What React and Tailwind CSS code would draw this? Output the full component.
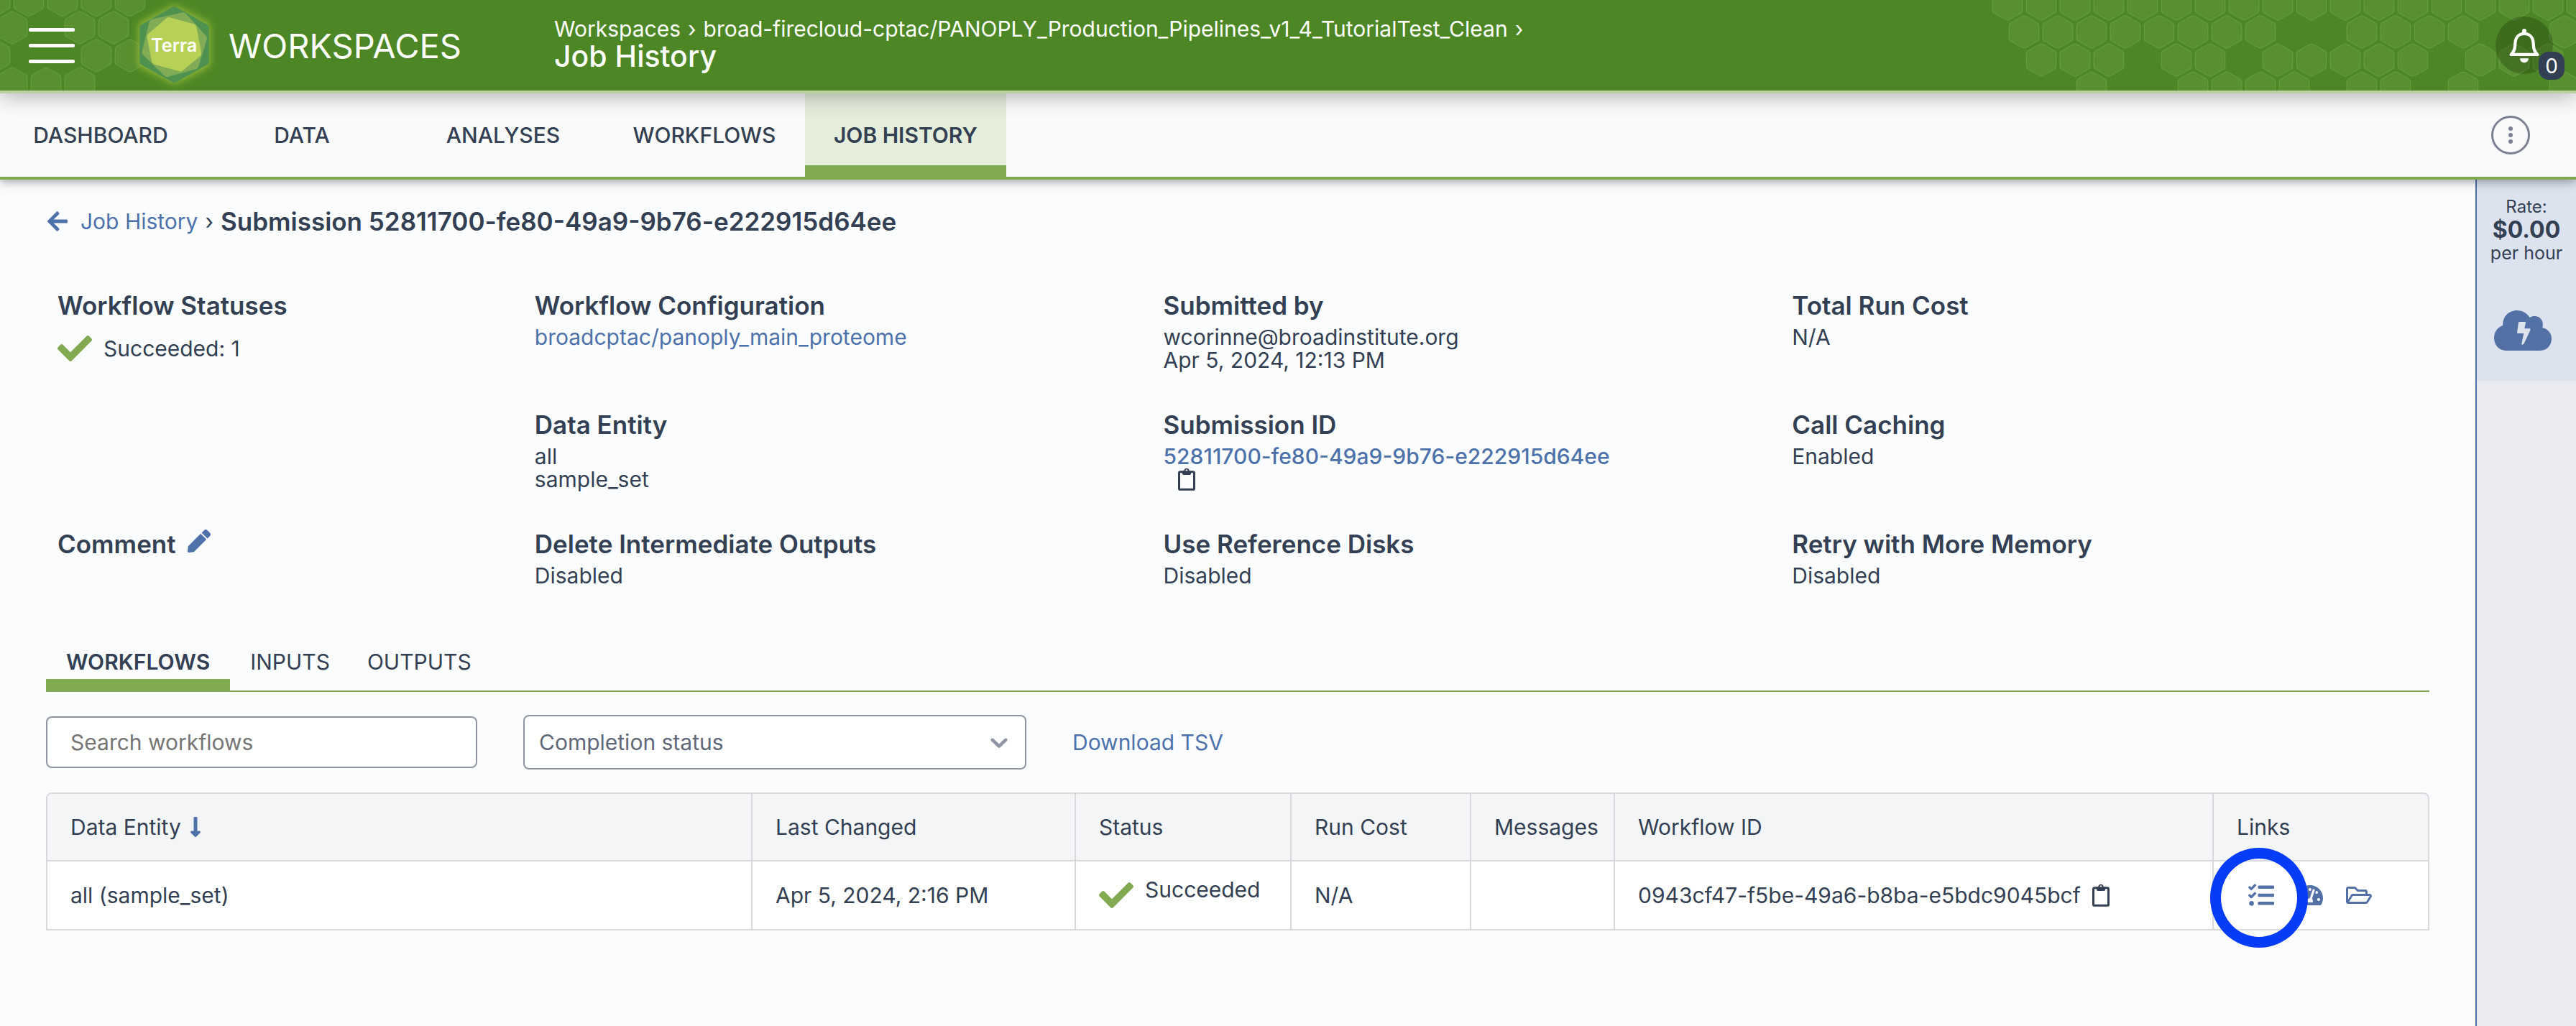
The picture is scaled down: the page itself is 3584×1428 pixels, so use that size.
import {
  FaArrowLeft,
  FaCheck,
  FaLongArrowAltDown,
  FaPen,
  FaRegFolderOpen,
  FaTachometerAlt,
  FaTasks,
} from "react-icons/fa";

const HEX =
  "M-3 -21.5 Q0 -23.2 3 -21.5 L18 -13 Q20.7 -11.5 20.7 -8.5 L20.7 8.5 Q20.7 11.5 18 13 L3 21.5 Q0 23.2 -3 21.5 L-18 13 Q-20.7 11.5 -20.7 8.5 L-20.7 -8.5 Q-20.7 -11.5 -18 -13 Z";

const RIGHT_ROWS = [
  { x: 33, y: 5.5, cells: [0, 1, 2, 3, 4, 5, 6, 7, 8, 9, 10, 11, 12, 13, 14, 15, 16, 17] },
  { x: 56, y: 44.5, cells: [0, 1, 2, 3, 4, 5, 6, 7, 10, 11, 12, 13, 16] },
  { x: 33, y: 83.5, cells: [1, 2, 3, 5, 6, 8, 9, 10, 11, 12, 14, 15, 16] },
  { x: 56, y: 122.5, cells: [2, 5, 6, 7, 8, 10, 11, 13, 16] },
];

const LEFT_ROWS = [
  { x: -7, y: 0, cells: [0, 1, 2, 3, 4] },
  { x: 17, y: 38.5, cells: [0, 2, 3] },
  { x: -7, y: 77.5, cells: [0, 3, 4] },
  { x: 17, y: 116.5, cells: [0, 1, 2] },
];

function HexField({ rows, width, className }) {
  return (
    <svg aria-hidden="true" width={width} height="126" viewBox={`0 0 ${width} 126`} className={className}>
      {rows.map((row) =>
        row.cells.map((c) => (
          <path
            key={`${row.y}-${c}`}
            d={HEX}
            transform={`translate(${row.x + c * 47} ${row.y})`}
            fill="#588f2f"
            stroke="#639a3f"
            strokeWidth="1.4"
          />
        ))
      )}
    </svg>
  );
}

function TerraLogo() {
  return (
    <svg
      role="img"
      aria-label="Terra"
      viewBox="552 0 350 378"
      className="h-[126px] w-[117px] overflow-visible"
    >
      <defs>
        <filter id="glow" x="-30%" y="-30%" width="160%" height="160%">
          <feGaussianBlur stdDeviation="16" />
        </filter>
      </defs>
      <path d="M727 22L875 100V275L727 350L580 275V100Z" fill="#a5c840" filter="url(#glow)" opacity="0.85" />
      <g strokeLinejoin="round" strokeWidth="32">
        <path d="M727 43L856 117V257L727 329L598 257V117Z" fill="#4f9250" stroke="#4f9250" />
        <path d="M764 68L847 160L813 273L697 305L608 218L638 96Z" fill="#82ab56" stroke="#82ab56" />
        <path d="M705 88L804 116L824 223L752 282L649 254L629 153Z" fill="#b6d156" stroke="#b6d156" />
      </g>
      <text x="726" y="216" textAnchor="middle" fontSize="76" fontWeight="600" fill="#fff">
        Terra
      </text>
    </svg>
  );
}

function Bell() {
  return (
    <svg aria-hidden="true" viewBox="1280 112 128 148" className="h-[49px] w-[42px]">
      <path
        d="M1288 224C1299 213 1305 200 1305 182C1305 152 1320 135 1344 135C1368 135 1383 152 1383 182C1383 200 1389 213 1400 224Z"
        fill="none"
        stroke="#fff"
        strokeWidth="13"
        strokeLinejoin="round"
      />
      <path d="M1344 123V132" stroke="#fff" strokeWidth="18" strokeLinecap="round" />
      <path d="M1326 240H1362C1362 252 1354 258 1344 258C1334 258 1326 252 1326 240Z" fill="#fff" />
    </svg>
  );
}

function Clipboard() {
  return (
    <svg aria-hidden="true" viewBox="96 207 72 96" className="h-8 w-6">
      <rect x="100.5" y="224.500" width="63" height="73.500" rx="5" fill="none" stroke="#333f52" strokeWidth="9" />
      <path
        fillRule="evenodd"
        fill="#333f52"
        d="M114 220H121A11 11 0 0 1 143 220H150V232Q150 237 145 237H119Q114 237 114 232ZM132 214A4.500 4.500 0 1 0 132 223A4.500 4.500 0 1 0 132 214Z"
      />
    </svg>
  );
}

function CloudBolt() {
  return (
    <svg aria-hidden="true" viewBox="0 0 240 168" className="h-14 w-20">
      <path
        d="M50 168C20 168 0 144 0 115C0 90 15 70 37 62C35 28 60 0 96 0C119 0 138 12 149 30C162 22 181 22 193 33C203 43 206 57 202 73C225 77 240 96 240 118C240 147 220 168 192 168Z"
        fill="#5471a6"
      />
      <path
        d="M106 48H129Q133 48 132 52L127 76H149Q153 77 152 81L125 139Q115 148 115 139L124 96H100Q96 96 96 92L102 51Q102 48 106 48Z"
        fill="#dce3ee"
      />
    </svg>
  );
}

const NAV = ["Dashboard", "Data", "Analyses", "Workflows", "Job History"];

function Field({ title, children }) {
  return (
    <section>
      <h3 className="text-[35px] leading-10 font-semibold">{title}</h3>
      <div className="mt-2 leading-8">{children}</div>
    </section>
  );
}

const link = "text-[#4d72aa]";
const th = "h-[94px] border-b-2 border-[#d7d9dd] bg-[#f4f5f7] pl-8 text-left font-normal";
const td = "h-[94px] border-[#d7d9dd] bg-white px-8";

export default function App() {
  return (
    <div className="flex min-h-screen flex-col bg-[#fbfcfe] font-['Inter',sans-serif] text-[30px] leading-9 text-[#333f52]">
      <header className="relative z-20 flex h-[130px] items-center border-b-4 border-[#b9d2a0] bg-[#4d8725] text-white shadow-[0_4px_28px_rgba(0,0,0,0.3)]">
        <HexField rows={LEFT_ROWS} width={210} className="absolute top-0 left-0" />
        <HexField rows={RIGHT_ROWS} width={824} className="absolute top-0 right-0" />
        <button aria-label="Menu" className="relative ml-10 flex w-16 flex-col gap-[17px]">
          <span className="h-[5px] rounded-xs bg-white" />
          <span className="h-[5px] rounded-xs bg-white" />
          <span className="h-[5px] rounded-xs bg-white" />
        </button>
        <a href="#home" className="relative ml-20 flex w-[587px] items-center gap-[17px]">
          <TerraLogo />
          <span className="text-[47px] leading-none">WORKSPACES</span>
        </a>
        <div className="relative pb-1.5">
          <nav aria-label="Breadcrumb" className="flex gap-2.5">
            <a href="#workspaces">Workspaces</a>
            <span>›</span>
            <a href="#workspace">broad-firecloud-cptac/PANOPLY_Production_Pipelines_v1_4_TutorialTest_Clean</a>
            <span>›</span>
          </nav>
          <h1 className="text-[41px] leading-10 font-medium">Job History</h1>
        </div>
        <button
          aria-label="Notifications"
          className="relative mr-8 ml-auto flex size-20 items-center justify-center rounded-full bg-black/20"
        >
          <Bell />
          <span className="absolute -right-4 -bottom-2 flex h-[39px] w-9 items-center justify-center rounded-[14px] bg-[#333f52] text-[28px]">
            0
          </span>
        </button>
      </header>

      <nav className="relative z-10 flex h-[120px] items-stretch border-b-4 border-[#82ab51] bg-[#fafafa] font-medium uppercase shadow-[0_2px_14px_rgba(0,0,0,0.4)]">
        {NAV.map((n) => (
          <a
            key={n}
            href={`#${n}`}
            className={
              n === "Job History"
                ? "flex w-[280px] items-center justify-center border-b-16 border-[#82ab51] bg-[#e5eedb] pt-4 font-semibold"
                : "flex w-[280px] items-center justify-center"
            }
          >
            {n}
          </a>
        ))}
        <button
          aria-label="Workspace actions"
          className="mr-16 ml-auto flex size-[54px] flex-col items-center justify-center gap-[3px] self-center rounded-full border-3 border-[#7b8190]"
        >
          <span className="size-1.5 rounded-full bg-[#7b8190]" />
          <span className="size-1.5 rounded-full bg-[#7b8190]" />
          <span className="size-1.5 rounded-full bg-[#7b8190]" />
        </button>
      </nav>

      <div className="flex grow">
        <main className="min-w-0 grow px-16 pt-[38px]">
          <div className="flex items-center">
            <a href="#history" className={`flex items-center gap-4 ${link}`}>
              <FaArrowLeft className="size-8" />
              Job History
            </a>
            <span className="mx-2.5">›</span>
            <h2 className="text-[35px] leading-10 font-semibold">Submission 52811700-fe80-49a9-9b76-e222915d64ee</h2>
          </div>

          <div className="mt-[77px] grid grid-cols-[664fr_875fr_875fr_875fr] gap-y-[54px] pr-3 pl-4">
            <section className="row-span-2">
              <h3 className="text-[35px] leading-10 font-semibold">Workflow Statuses</h3>
              <div className="mt-4 flex items-center gap-4">
                <FaCheck className="size-12 text-[#82ab51]" />
                Succeeded: 1
              </div>
            </section>
            <Field title="Workflow Configuration">
              <a href="#config" className={link}>broadcptac/panoply_main_proteome</a>
            </Field>
            <Field title="Submitted by">
              <p>wcorinne@broadinstitute.org</p>
              <p>Apr 5, 2024, 12:13 PM</p>
            </Field>
            <Field title="Total Run Cost">N/A</Field>
            <Field title="Data Entity">
              <p>all</p>
              <p>sample_set</p>
            </Field>
            <Field title="Submission ID">
              <a href="#submission" className={`font-medium ${link}`}>52811700-fe80-49a9-9b76-e222915d64ee</a>
              <button aria-label="Copy submission ID" className="ml-5 block">
                <Clipboard />
              </button>
            </Field>
            <Field title="Call Caching">Enabled</Field>
            <section className="flex items-start gap-4">
              <h3 className="text-[35px] leading-10 font-semibold">Comment</h3>
              <button aria-label="Edit comment" className={link}>
                <FaPen className="size-8" />
              </button>
            </section>
            <Field title="Delete Intermediate Outputs">Disabled</Field>
            <Field title="Use Reference Disks">Disabled</Field>
            <Field title="Retry with More Memory">Disabled</Field>
          </div>

          <div role="tablist" className="mt-[86px] flex border-b-2 border-[#82ab51]">
            <button role="tab" aria-selected="true" className="border-b-16 border-[#82ab51] px-7 pb-1.5 font-semibold">
              WORKFLOWS
            </button>
            <button role="tab" aria-selected="false" className="border-b-16 border-transparent px-7 pb-1.5">
              INPUTS
            </button>
            <button role="tab" aria-selected="false" className="border-b-16 border-transparent px-6 pb-1.5">
              OUTPUTS
            </button>
          </div>

          <div className="mt-8 flex items-center gap-16">
            <input
              type="text"
              aria-label="Search workflows"
              placeholder="Search workflows"
              className="h-[72px] w-[600px] rounded-lg border-2 border-[#8f95a3] bg-white px-8 placeholder:text-[#757575]"
            />
            <div className="relative w-[700px]">
              <select
                aria-label="Completion status"
                className="h-[76px] w-full appearance-none rounded-lg border-2 border-[#8f95a3] bg-white px-5 text-[#5f6778]"
              >
                <option>Completion status</option>
              </select>
              <svg
                aria-hidden="true"
                viewBox="0 0 20 20"
                className="pointer-events-none absolute top-[18px] right-[18px] size-10 fill-[#8f95a3]"
              >
                <path d="M4.516 7.548c0.436-0.446 1.043-0.481 1.576 0l3.908 3.747 3.908-3.747c0.533-0.481 1.141-0.446 1.574 0 0.436 0.445 0.408 1.197 0 1.615-0.406 0.418-4.695 4.502-4.695 4.502-0.217 0.223-0.502 0.335-0.787 0.335s-0.57-0.112-0.789-0.335c0 0-4.287-4.084-4.695-4.502s-0.436-1.170 0-1.615z" />
              </svg>
            </div>
            <a href="#tsv" className={link}>Download TSV</a>
          </div>

          <table className="mt-8 w-full table-fixed border-separate border-spacing-0 rounded-t-lg border-2 border-[#d7d9dd]">
            <colgroup>
              <col />
              <col className="w-[450px]" />
              <col className="w-[300px]" />
              <col className="w-[250px]" />
              <col className="w-[200px]" />
              <col className="w-[833px]" />
              <col className="w-[298px]" />
            </colgroup>
            <thead>
              <tr>
                <th className={`${th} rounded-tl-md border-r-2`}>
                  <button className="flex items-center gap-3">
                    Data Entity
                    <FaLongArrowAltDown className="h-8 w-4 text-[#4d72aa]" />
                  </button>
                </th>
                <th className={`${th} border-r-2`}>Last Changed</th>
                <th className={`${th} border-r-2`}>Status</th>
                <th className={`${th} border-r-2`}>Run Cost</th>
                <th className={`${th} border-r-2`}>Messages</th>
                <th className={`${th} border-r-2`}>Workflow ID</th>
                <th className={`${th} rounded-tr-md`}>Links</th>
              </tr>
            </thead>
            <tbody>
              <tr>
                <td className={`${td} border-r-2`}>all (sample_set)</td>
                <td className={`${td} border-r-2`}>Apr 5, 2024, 2:16 PM</td>
                <td className={`${td} border-r-2`}>
                  <div className="flex items-start gap-4">
                    <FaCheck className="size-12 shrink-0 text-[#82ab51]" />
                    <span className="leading-8">Succeeded</span>
                  </div>
                </td>
                <td className={`${td} border-r-2`}>N/A</td>
                <td className={`${td} border-r-2`} />
                <td className={`${td} border-r-2`}>
                  <div className="flex items-center gap-4">
                    0943cf47-f5be-49a6-b8ba-e5bdc9045bcf
                    <button aria-label="Copy workflow ID">
                      <Clipboard />
                    </button>
                  </div>
                </td>
                <td className={td}>
                  <div className="flex items-center gap-8 pl-4 text-[#5471a6]">
                    <a href="#job-manager" aria-label="Job Manager" className="relative">
                      <FaTasks className="size-9" />
                      <span className="absolute -top-12 -left-[53px] z-10 h-[139px] w-[136px] rounded-[50%] border-15 border-[#053cf7]" />
                    </a>
                    <a href="#dashboard" aria-label="Workflow Dashboard">
                      <FaTachometerAlt className="size-9" />
                    </a>
                    <a href="#folder" aria-label="Execution directory">
                      <FaRegFolderOpen className="size-9" />
                    </a>
                  </div>
                </td>
              </tr>
            </tbody>
          </table>
        </main>

        <aside className="w-[140px] shrink-0 border-l-2 border-[#4d72aa] bg-[#e9ebf1]">
          <div className="flex flex-col items-center bg-[#dce3ee] pt-6 pb-[42px] text-center">
            <p className="text-2xl leading-7">Rate:</p>
            <p className="text-[32px] leading-9 font-bold">$0.00</p>
            <p className="text-[25px] leading-7">per hour</p>
            <button aria-label="Environment configuration" className="mt-[66px] mr-2.5">
              <CloudBolt />
            </button>
          </div>
        </aside>
      </div>
    </div>
  );
}
